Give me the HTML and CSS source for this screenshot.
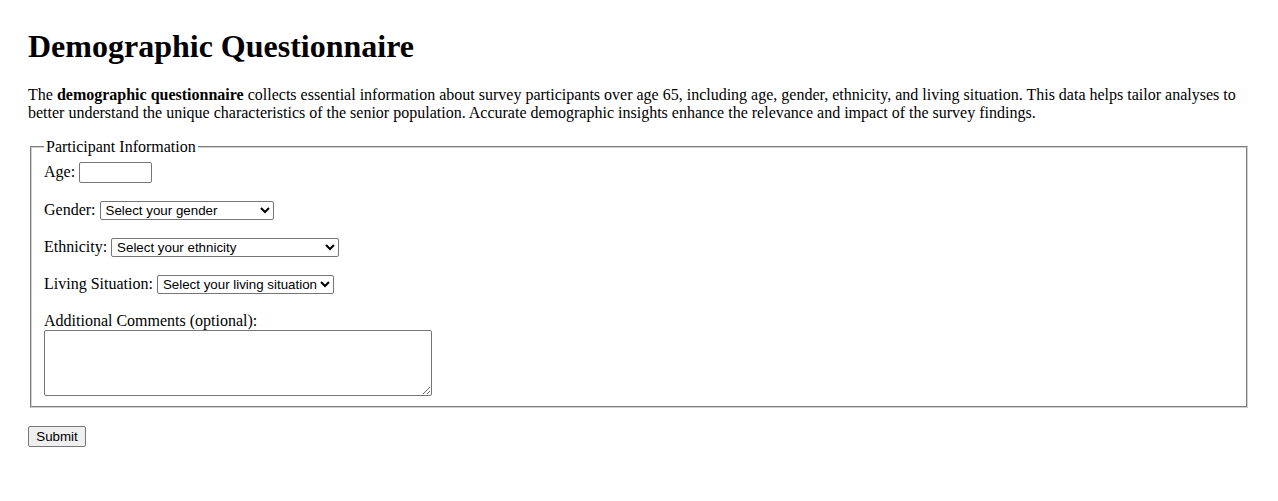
FILE: index.html
```html
<!DOCTYPE html>
<html lang="en">
<head>
<meta charset="utf-8">
<title>Demographic Questionnaire</title>
<link rel="stylesheet" href="styles.css">
</head>
<body>
<h1 class="title">Demographic Questionnaire</h1>
<p class="intro">The <strong>demographic questionnaire</strong> collects essential information about survey participants over age 65, including age, gender, ethnicity, and living situation. This data helps tailor analyses to better understand the unique characteristics of the senior population. Accurate demographic insights enhance the relevance and impact of the survey findings.</p>
<form class="survey">
  <fieldset class="group">
    <legend class="group-title">Participant Information</legend>
    <div class="row">
      <label for="age">Age:</label>
      <input class="field age" type="text" id="age">
    </div>
    <div class="row">
      <label for="gender">Gender:</label>
      <select class="field sel sel-gender" id="gender">
        <option>Select your gender</option>
      </select>
    </div>
    <div class="row">
      <label for="eth">Ethnicity:</label>
      <select class="field sel sel-eth" id="eth">
        <option>Select your ethnicity</option>
      </select>
    </div>
    <div class="row">
      <label for="living">Living Situation:</label>
      <select class="field sel sel-living" id="living">
        <option>Select your living situation</option>
      </select>
    </div>
    <div class="row last">
      <label class="block-label" for="comments">Additional Comments (optional):</label>
      <textarea class="comments" id="comments"></textarea>
    </div>
  </fieldset>
  <button class="submit" type="submit">Submit</button>
</form>
</body>
</html>
```

FILE: styles.css
```css
html, body {
  background: #ffffff;
  color: #000000;
}
body {
  margin: 8px;
  padding: 20px;
  font-family: "Liberation Serif", "Times New Roman", serif;
  font-size: 16px;
  line-height: normal;
}
.title {
  margin: 0 0 21px 0;
  font-size: 32px;
  font-weight: bold;
}
.intro {
  margin: 0 0 16px 0;
}
.survey {
  margin: 0;
}
.group {
  margin: 0 2px 18px 2px;
  padding: 6px 12px 10px 12px;
  border: 2px groove #d0d0d0;
  min-width: 0;
}
.group-title {
  padding: 0 2px;
}
.row {
  margin-bottom: 18px;
}
.row.last {
  margin-bottom: 0;
}
.field {
  font-family: "Liberation Sans", Arial, sans-serif;
  font-size: 13.33px;
  box-sizing: border-box;
  color: #000;
  background: #fff;
  border: 1px solid #767676;
  border-radius: 2px;
  vertical-align: baseline;
}
.age {
  width: 73px;
  height: 21px;
  padding: 1px 2px;
}
.sel {
  height: 19px;
  padding: 0 0 0 1px;
}
.sel-gender { width: 174px; }
.sel-eth { width: 228px; }
.sel-living { width: 177px; }
.block-label {
  display: block;
}
.comments {
  display: block;
  box-sizing: border-box;
  width: 388px;
  height: 66px;
  margin: 0;
  padding: 2px;
  border: 1px solid #767676;
  border-radius: 2px;
  font-family: "Liberation Mono", monospace;
  font-size: 13.33px;
  resize: both;
}
.submit {
  font-family: "Liberation Sans", Arial, sans-serif;
  font-size: 13.33px;
  box-sizing: border-box;
  height: 21px;
  width: 58px;
  padding: 1px 6px;
  color: #000;
  background: #efefef;
  border: 1px solid #767676;
  border-radius: 2px;
}
```
